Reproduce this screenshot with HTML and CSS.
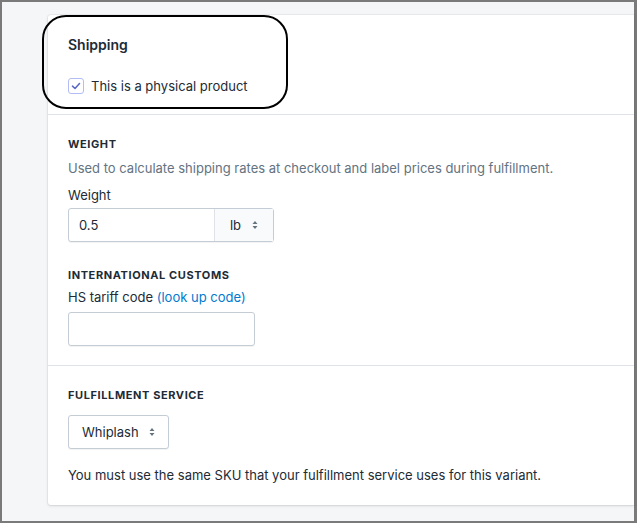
FILE: index.html
```html
<!DOCTYPE html>
<html lang="en">
<head>
    <meta charset="UTF-8">
    <title>Shipping</title>
    <link rel="stylesheet" href="styles.css">
</head>
<body>
    <div class="frame">
        <div class="card">
            <div class="section top">
                <h2>Shipping</h2>
                <label class="check">
                    <span class="box">
                        <svg width="10" height="10" viewBox="0 0 10 10"><path d="M1.5 5.2 L4 7.5 L8.5 2.5" fill="none" stroke="#5c6ac4" stroke-width="1.6" stroke-linecap="round" stroke-linejoin="round"/></svg>
                    </span>
                    This is a physical product
                </label>
                <div class="callout"></div>
            </div>

            <div class="section">
                <h3>Weight</h3>
                <p class="hint">Used to calculate shipping rates at checkout and label prices during fulfillment.</p>
                <div class="label">Weight</div>
                <div class="field split">
                    <span class="value">0.5</span>
                    <span class="unit">lb
                        <svg class="arrows" width="6" height="10" viewBox="0 0 6 10"><path d="M3 1 L5.5 4 H0.5 Z M3 9 L0.5 6 H5.5 Z" fill="#637381"/></svg>
                    </span>
                </div>

                <h3 class="gap">International customs</h3>
                <div class="label tight">HS tariff code <a href="#">(look up code)</a></div>
                <div class="field empty"></div>
            </div>

            <div class="section">
                <h3>Fulfillment service</h3>
                <div class="field select">Whiplash
                    <svg class="arrows" width="6" height="10" viewBox="0 0 6 10"><path d="M3 1 L5.5 4 H0.5 Z M3 9 L0.5 6 H5.5 Z" fill="#637381"/></svg>
                </div>
                <p class="note">You must use the same SKU that your fulfillment service uses for this variant.</p>
            </div>
        </div>
    </div>
</body>
</html>
```

FILE: styles.css
```css
body { margin: 0; font-family: Inter, "Noto Sans", sans-serif; color: #212b36; }
.frame { width: 637px; height: 523px; box-sizing: border-box; border: 2px solid #7a7a7a; border-right-width: 3px; background: #f4f6f8; padding: 13px 0 0 46px; }
.card { background: #fff; border-radius: 3px 0 0 3px; box-shadow: 0 0 0 1px rgba(63,63,68,0.05), 0 1px 3px 0 rgba(63,63,68,0.15); height: 490px; }
.section { padding: 21px 20px 19px 20px; border-bottom: 1px solid #dfe3e8; position: relative; }
.section:last-child { border-bottom: none; padding-top: 21px; }
.section.top { padding: 20px 20px 20px 20px; }
h2 { margin: 0; font-size: 14px; line-height: 20px; font-weight: 600; }
.check { display: flex; align-items: center; gap: 7px; margin-top: 23px; font-size: 13px; line-height: 16px; color: #212b36; }
.box { width: 14px; height: 14px; border: 1px solid #b3bcf5; border-radius: 3px; display: flex; align-items: center; justify-content: center; }
.callout { position: absolute; left: -6px; top: 0; width: 242px; height: 90px; border: 2px solid #000; border-radius: 24px; pointer-events: none; }
h3 { margin: 0; font-size: 11px; line-height: 16px; font-weight: 700; text-transform: uppercase; letter-spacing: 0.6px; }
h3.gap { margin-top: 25px; }
.hint { margin: 6px 0 0; font-size: 13px; line-height: 20px; color: #637381; }
.label { margin-top: 7px; font-size: 13px; line-height: 20px; }
.label.tight { margin-top: 4px; }
.label a { color: #007ace; text-decoration: none; }
.field { border: 1px solid #c4cdd5; border-radius: 3px; height: 32px; box-sizing: content-box; margin-top: 4px; font-size: 13px; box-shadow: 0 1px 0 rgba(22,29,37,0.05); }
.split { width: 204px; display: flex; margin-top: 3px; }
.value { flex: 1; padding-left: 10px; line-height: 32px; }
.unit { width: 58px; border-left: 1px solid #dfe3e8; background: #f9fafb; display: flex; align-items: center; justify-content: center; gap: 11px; }
.empty { width: 185px; margin-top: 5px; }
.select { display: inline-flex; align-items: center; gap: 10px; padding: 0 13px; margin-top: 12px; background: #fff; }
.note { margin: 16px 0 0; font-size: 13px; line-height: 20px; }
```
